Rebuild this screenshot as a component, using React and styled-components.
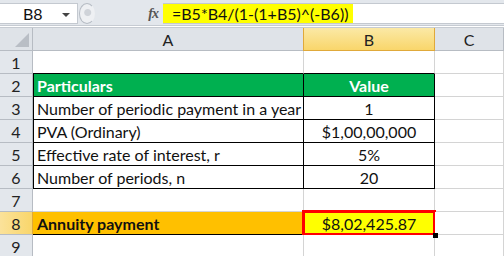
import React from 'react';
import styled, { createGlobalStyle } from 'styled-components';

const GlobalStyle = createGlobalStyle`
    body {
        margin: 0;
        background: #fff;
        font-family: Lato, "Liberation Sans", Arial, sans-serif;
    }
`;

const COLS = '33px 271px 131px 69px';

const rows = [
    { n: 1, a: '', b: '' },
    { n: 2, a: 'Particulars', b: 'Value', kind: 'head' },
    { n: 3, a: 'Number of periodic payment in a year', b: '1', kind: 'table' },
    { n: 4, a: 'PVA (Ordinary)', b: '$1,00,00,000', kind: 'table' },
    { n: 5, a: 'Effective rate of interest, r', b: '5%', kind: 'table' },
    { n: 6, a: 'Number of periods, n', b: '20', kind: 'table' },
    { n: 7, a: '', b: '' },
    { n: 8, a: 'Annuity payment', b: '$8,02,425.87', kind: 'result' },
    { n: 9, a: '', b: '' },
];

function App() {
    return (
        <Page>
            <GlobalStyle />
            <FormulaBar>
                <NameBox>
                    <span>B8</span>
                    <DropArrow />
                </NameBox>
                <Splitter>
                    <Knob />
                </Splitter>
                <FxLabel>fx</FxLabel>
                <FormulaInput>
                    <Highlight>=B5*B4/(1-(1+B5)^(-B6))</Highlight>
                </FormulaInput>
            </FormulaBar>
            <Sheet>
                <Corner>
                    <CornerTriangle />
                </Corner>
                <ColHead>A</ColHead>
                <ColHead active>B</ColHead>
                <ColHead>C</ColHead>
                {rows.map(r => {
                    const boxed = r.kind === 'head' || r.kind === 'table';
                    return (
                        <React.Fragment key={r.n}>
                            <RowHead active={r.n === 8}>{r.n}</RowHead>
                            <Cell kind={r.kind} left={boxed} dark={r.n === 1 || boxed} rightDark={boxed || r.kind === 'result'}>
                                {r.a}
                            </Cell>
                            <Cell kind={r.kind} center active={r.kind === 'result'} dark={r.n === 1 || boxed} rightDark={boxed}>
                                {r.b}
                            </Cell>
                            <Cell />
                        </React.Fragment>
                    );
                })}
            </Sheet>
        </Page>
    );
}

const Page = styled.div`
    width: 504px;
    height: 256px;
    overflow: hidden;
    background: #fff;
`;

const FormulaBar = styled.div`
    display: flex;
    height: 21px;
    padding: 3px 0 1px 0;
    background: #e3e7ec;
    border-bottom: 1px solid #c6cbd2;
    box-sizing: content-box;
    align-items: stretch;
`;

const NameBox = styled.div`
    width: 78px;
    background: #fff;
    border: 1px solid #c4c9d0;
    border-left: none;
    box-sizing: border-box;
    display: flex;
    align-items: center;
    justify-content: space-between;
    padding: 0 7px 0 23px;
    font-size: 16px;
    color: #111;
`;

const DropArrow = styled.span`
    width: 0;
    height: 0;
    border-left: 4px solid transparent;
    border-right: 4px solid transparent;
    border-top: 4px solid #444;
    margin-top: 2px;
`;

const Splitter = styled.div`
    width: 24px;
    display: flex;
    align-items: center;
    justify-content: flex-start;
    padding-left: 1px;
`;

const Knob = styled.div`
    width: 16px;
    height: 21px;
    border-radius: 50%;
    border: 1px solid #b6bcc4;
    border-right-color: transparent;
    box-sizing: border-box;
    background: radial-gradient(circle at 55% 45%, #cfd3d9 0 3px, #eef0f3 4px);
`;

const FxLabel = styled.div`
    width: 60px;
    display: flex;
    align-items: center;
    justify-content: flex-end;
    padding-right: 5px;
    box-sizing: border-box;
    font-family: "Liberation Serif", "Times New Roman", serif;
    font-style: italic;
    font-weight: bold;
    font-size: 14px;
    color: #555;
    letter-spacing: -1px;
`;

const FormulaInput = styled.div`
    flex: 1;
    background: #fff;
    border-top: 1px solid #c4c9d0;
    border-bottom: 1px solid #c4c9d0;
    box-sizing: border-box;
    display: flex;
    align-items: stretch;
`;

const Highlight = styled.span`
    background: #ffff00;
    font-size: 16px;
    color: #111;
    padding: 0 5px 0 9px;
    display: flex;
    align-items: center;
`;

const Sheet = styled.div`
    display: grid;
    grid-template-columns: ${COLS};
    grid-auto-rows: 23px;
    margin-top: 1px;
    border-top: 1px solid #c6cbd2;
`;

const Corner = styled.div`
    position: relative;
    background: #dfe3e8;
    border-right: 1px solid #b7bcc3;
    border-bottom: 1px solid #b7bcc3;
`;

const CornerTriangle = styled.div`
    position: absolute;
    right: 3px;
    bottom: 3px;
    width: 0;
    height: 0;
    border-left: 14px solid transparent;
    border-bottom: 14px solid #b9bec5;
`;

const ColHead = styled.div`
    display: flex;
    align-items: center;
    justify-content: center;
    font-size: 16px;
    color: #222;
    background: ${p => p.active ? 'linear-gradient(#fbe9a6, #f9d66b)' : '#dfe3e8'};
    border-right: 1px solid ${p => p.active ? '#e0a93a' : '#b7bcc3'};
    border-bottom: 1px solid ${p => p.active ? '#e0a93a' : '#b7bcc3'};
    border-left: ${p => p.active ? '1px solid #e0a93a' : 'none'};
    margin-left: ${p => p.active ? '-1px' : '0'};
`;

const RowHead = styled.div`
    display: flex;
    align-items: center;
    justify-content: center;
    font-size: 16px;
    color: #222;
    background: ${p => p.active ? 'linear-gradient(90deg, #fbe29a, #f9d66b)' : '#e3e7ec'};
    border-right: 1px solid ${p => p.active ? '#e0a93a' : '#b7bcc3'};
    border-bottom: 1px solid #b7bcc3;
`;

const cellBg = {
    head: '#00b050',
    result: '#ffc000',
};

const Cell = styled.div`
    position: relative;
    display: flex;
    align-items: center;
    justify-content: ${p => p.center ? 'center' : 'flex-start'};
    padding: 0 4px;
    font-size: 16px;
    white-space: nowrap;
    color: ${p => p.kind === 'head' ? '#fff' : '#111'};
    font-weight: ${p => (p.kind === 'head' || (p.kind === 'result' && !p.active)) ? 'bold' : 'normal'};
    background: ${p => p.active ? '#ffff00' : (cellBg[p.kind] || '#fff')};
    border-right: 1px solid ${p => p.rightDark ? '#000' : '#d4d4d4'};
    border-bottom: 1px solid ${p => (p.dark || p.kind === 'result') ? '#000' : '#d4d4d4'};
    box-shadow: ${p => p.left ? 'inset 1px 0 0 #000' : 'none'};

    ${p => p.active && `
        &::after {
            content: '';
            position: absolute;
            inset: -2px -2px -2px -2px;
            border: 3px solid #ff0000;
            pointer-events: none;
        }
        &::before {
            content: '';
            position: absolute;
            right: -4px;
            bottom: -4px;
            width: 5px;
            height: 5px;
            background: #000;
            z-index: 2;
        }
    `}
`;

export default App;
